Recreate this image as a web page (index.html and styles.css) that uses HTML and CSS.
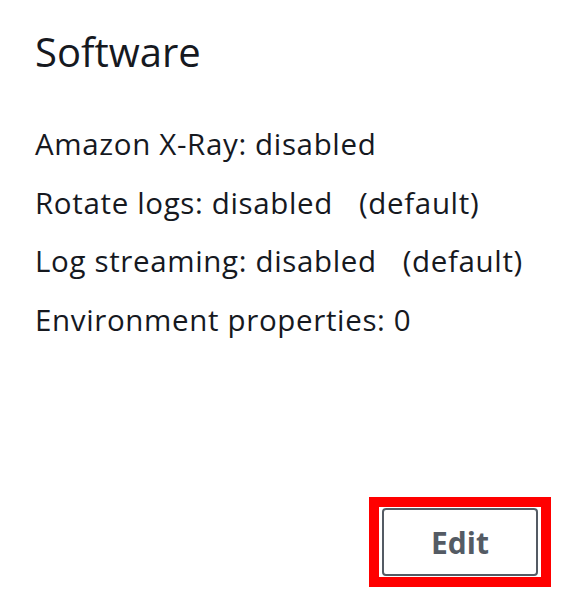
FILE: index.html
```html
<!DOCTYPE html>
<html>
<head>
<meta charset="utf-8">
<link rel="stylesheet" href="styles.css">
</head>
<body>
<div class="card">
  <h2 class="title">Software</h2>
  <div class="rows">
    <div class="row">Amazon X-Ray: disabled</div>
    <div class="row">Rotate logs: disabled<span class="def">(default)</span></div>
    <div class="row">Log streaming: disabled<span class="def">(default)</span></div>
    <div class="row">Environment properties: 0</div>
  </div>
  <div class="actions">
    <div class="highlight">
      <button class="btn">Edit</button>
    </div>
  </div>
</div>
</body>
</html>
```
FILE: styles.css
```css
html, body {
  margin: 0;
  padding: 0;
  background: #ffffff;
}
.card {
  width: 563px;
  height: 597px;
  box-sizing: border-box;
  padding: 26px 12px 10px 35px;
  display: flex;
  flex-direction: column;
  font-family: "Open Sans", "Noto Sans", sans-serif;
  color: #16191f;
}
.title {
  margin: 0;
  font-size: 40px;
  font-weight: 400;
  line-height: 52px;
}
.rows {
  margin-top: 37px;
  display: flex;
  flex-direction: column;
}
.row {
  font-size: 29.5px;
  letter-spacing: 0.65px;
  line-height: 58.5px;
  white-space: nowrap;
}
.def {
  margin-left: 26px;
}
.actions {
  margin-top: auto;
  display: flex;
  justify-content: flex-end;
}
.highlight {
  border: 10px solid #ff0000;
  padding: 1px 3px;
}
.btn {
  display: block;
  width: 156px;
  height: 68px;
  box-sizing: border-box;
  background: #ffffff;
  border: 2px solid #545b64;
  border-radius: 4px;
  color: #545b64;
  font-family: "Open Sans", "Noto Sans", sans-serif;
  font-weight: 700;
  font-size: 30px;
  padding: 0;
}
```
